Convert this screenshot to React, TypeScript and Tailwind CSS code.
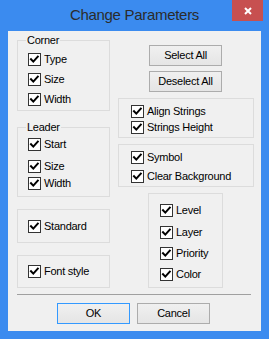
import React from "react";

const font = { fontFamily: '"Liberation Sans", Arial, sans-serif' };

interface CheckProps {
  label: string;
  className?: string;
}

const Check: React.FC<CheckProps> = ({ label, className = "" }) => (
  <div className={`flex h-[13px] items-center ${className}`}>
    <span className="flex h-[13px] w-[13px] shrink-0 items-center justify-center border border-[#333333] bg-white">
      <svg width="11" height="11" viewBox="0 0 11 11">
        <polyline
          points="2,5.2 4.3,7.6 8.8,2.6"
          fill="none"
          stroke="#000"
          strokeWidth="2"
          strokeLinecap="square"
        />
      </svg>
    </span>
    <span className="ml-[3px] whitespace-nowrap text-[11px] leading-[13px] tracking-[-0.25px] text-black">
      {label}
    </span>
  </div>
);

const Legend: React.FC<{ text: string }> = ({ text }) => (
  <span className="-mt-[7px] ml-[8px] block h-[13px] w-fit bg-[#f0f0f0] px-[1px] text-[11px] leading-[13px] tracking-[-0.25px] text-black">
    {text}
  </span>
);

const WinButton: React.FC<{ label: string; primary?: boolean; className?: string }> = ({
  label,
  primary = false,
  className = "",
}) => (
  <button
    type="button"
    className={`flex h-[21px] w-[73px] items-center justify-center border bg-linear-to-b from-[#f0f0f0] to-[#e5e5e5] text-[11px] leading-[13px] tracking-[-0.25px] text-black ${
      primary ? "border-[#3399ff]" : "border-[#acacac]"
    } ${className}`}
  >
    {label}
  </button>
);

export default function App() {
  return (
    <div className="flex h-[339px] w-[269px] flex-col bg-[#3b8bef]" style={font}>
      {/* title bar */}
      <div className="relative flex h-[31px] shrink-0 items-center justify-center">
        <span className="mt-[-1px] text-[15px] tracking-[-0.3px] text-[#2b2b2b]">Change Parameters</span>
        <div className="absolute right-[6px] top-0 flex h-[21px] w-[31px] items-center justify-center bg-[#c75050]">
          <svg width="8" height="8" viewBox="0 0 8 8">
            <path d="M1 1 L7 7 M7 1 L1 7" stroke="#fff" strokeWidth="2" />
          </svg>
        </div>
      </div>

      {/* client area */}
      <div className="mx-[8px] flex h-[300px] flex-col bg-[#f0f0f0] pl-[9px] pr-[7px]">
        <div className="flex">
          {/* left column */}
          <div className="flex w-[93px] flex-col">
            <div className="mt-[9px] h-[71px] border border-[#dcdcdc] pl-[10px]">
              <div className="-ml-[10px]">
                <Legend text="Corner" />
              </div>
              <Check label="Type" className="mt-[6px]" />
              <Check label="Size" className="mt-[7px]" />
              <Check label="Width" className="mt-[7px]" />
            </div>

            <div className="mt-[16px] h-[70px] border border-[#dcdcdc] pl-[10px]">
              <div className="-ml-[10px]">
                <Legend text="Leader" />
              </div>
              <Check label="Start" className="mt-[4px]" />
              <Check label="Size" className="mt-[9px]" />
              <Check label="Width" className="mt-[4px]" />
            </div>

            <div className="mt-[12px] flex h-[34px] items-center border border-[#dcdcdc] pl-[10px]">
              <Check label="Standard" />
            </div>

            <div className="mt-[12px] flex h-[33px] items-center border border-[#dcdcdc] pl-[10px]">
              <Check label="Font style" />
            </div>
          </div>

          {/* right column */}
          <div className="ml-[8px] flex w-[136px] flex-col">
            <WinButton label="Select All" className="ml-[31px] mt-[14px]" />
            <WinButton label="Deselect All" className="ml-[31px] mt-[5px]" />

            <div className="mt-[6px] h-[40px] border border-[#dcdcdc] pl-[12px]">
              <Check label="Align Strings" className="mt-[6px]" />
              <Check label="Strings Height" className="mt-[3px]" />
            </div>

            <div className="mt-[6px] h-[43px] border border-[#dcdcdc] pl-[12px]">
              <Check label="Symbol" className="mt-[6px]" />
              <Check label="Clear Background" className="mt-[6px]" />
            </div>

            <div className="ml-[30px] mt-[6px] h-[95px] w-[75px] border border-[#dcdcdc] pl-[11px]">
              <Check label="Level" className="mt-[10px]" />
              <Check label="Layer" className="mt-[9px]" />
              <Check label="Priority" className="mt-[8px]" />
              <Check label="Color" className="mt-[8px]" />
            </div>
          </div>
        </div>

        <div className="mt-[6px] h-px w-[234px] bg-[#a0a0a0]" />

        <div className="mt-[8px] flex gap-[7px] pl-[40px]">
          <WinButton label="OK" primary />
          <WinButton label="Cancel" />
        </div>
      </div>
    </div>
  );
}
